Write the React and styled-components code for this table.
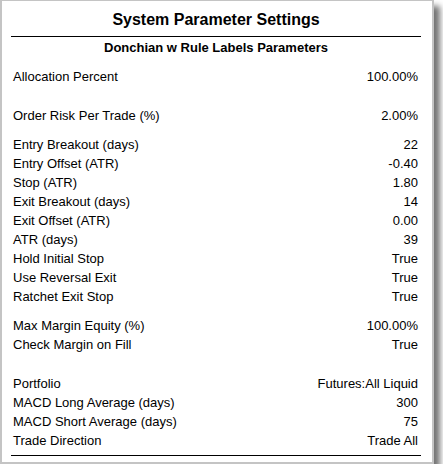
import styled, { createGlobalStyle } from 'styled-components';

const params = [
  { top: 10, rows: [['Allocation Percent', '100.00%']] },
  { top: 20, rows: [['Order Risk Per Trade (%)', '2.00%']] },
  {
    top: 10,
    rows: [
      ['Entry Breakout (days)', '22'],
      ['Entry Offset (ATR)', '-0.40'],
      ['Stop (ATR)', '1.80'],
      ['Exit Breakout (days)', '14'],
      ['Exit Offset (ATR)', '0.00'],
      ['ATR (days)', '39'],
      ['Hold Initial Stop', 'True'],
      ['Use Reversal Exit', 'True'],
      ['Ratchet Exit Stop', 'True'],
    ],
  },
  {
    top: 10,
    rows: [
      ['Max Margin Equity (%)', '100.00%'],
      ['Check Margin on Fill', 'True'],
    ],
  },
  {
    top: 20,
    rows: [
      ['Portfolio', 'Futures:All Liquid'],
      ['MACD Long Average (days)', '300'],
      ['MACD Short Average (days)', '75'],
      ['Trade Direction', 'Trade All'],
    ],
  },
];

function App() {
  return (
    <>
      <GlobalStyle />
      <Panel>
        <Title>System Parameter Settings</Title>
        <Subtitle>Donchian w Rule Labels Parameters</Subtitle>
        {params.map((group, i) => (
          <Group key={i} $top={group.top}>
            {group.rows.map(([label, value]) => (
              <Row key={label}>
                <span>{label}</span>
                <span>{value}</span>
              </Row>
            ))}
          </Group>
        ))}
        <Rule />
      </Panel>
    </>
  );
}

const GlobalStyle = createGlobalStyle`
  body {
    margin: 0;
    background: #fff;
    font-family: "Liberation Sans", Arial, sans-serif;
    color: #000;
  }
`;
const Panel = styled.div`
  box-sizing: border-box;
  width: 434px;
  border: 2px solid #c4c4c4;
  border-top-width: 1px;
  background: #fff;
  padding: 9px 11px 6px 9px;
  box-shadow: 6px 6px 6px rgba(0, 0, 0, 0.55);
`;
const Title = styled.h1`
  margin: 0;
  padding-bottom: 6px;
  border-bottom: 1px solid #000;
  font-size: 16px;
  line-height: 20px;
  font-weight: bold;
  text-align: center;
`;
const Subtitle = styled.h2`
  margin: 1px 0 0;
  font-size: 13px;
  line-height: 19px;
  font-weight: bold;
  text-align: center;
`;
const Group = styled.div`
  margin-top: ${(p) => p.$top}px;
  padding: 0 3px 0 2px;
`;
const Row = styled.div`
  display: flex;
  justify-content: space-between;
  font-size: 13px;
  line-height: 19px;
`;
const Rule = styled.hr`
  margin: 5px 0 0;
  border: 0;
  border-top: 1px solid #000;
`;

export default App;
